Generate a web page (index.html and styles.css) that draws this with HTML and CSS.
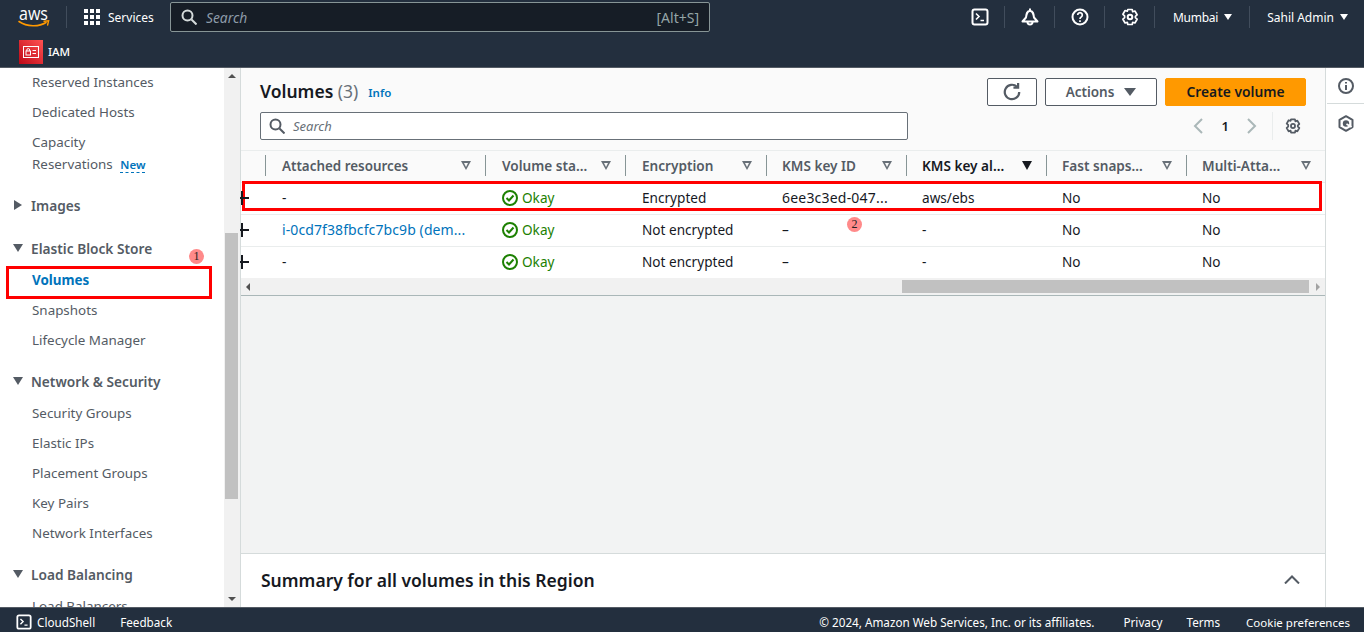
FILE: index.html
```html
<!DOCTYPE html>
<html>
<head>
    <title>Volumes | EC2</title>
    <link rel="stylesheet" href="styles.css">
</head>
<body>
    <header class="topnav">
        <div class="nav-row">
            <a class="logo">
                <svg width="32" height="24" viewBox="0 0 32 24">
                    <text x="1" y="13.500" class="logo-text" textLength="29" lengthAdjust="spacingAndGlyphs">aws</text>
                    <path d="M1 15.500c8 5.500 20 5.500 27 1" fill="none" stroke="#ff9900" stroke-width="1.600" stroke-linecap="round"/>
                    <path d="M26 15.200l4.600-.4-1 4.200" fill="none" stroke="#ff9900" stroke-width="1.400" stroke-linecap="round"/>
                </svg>
            </a>
            <span class="nav-sep sep-logo"></span>
            <span class="services-grid">
                <i></i><i></i><i></i><i></i><i></i><i></i><i></i><i></i><i></i>
            </span>
            <span class="nav-label services-label">Services</span>
            <div class="top-search">
                <svg width="16" height="16" viewBox="0 0 16 16" fill="none" stroke="#d5dbdb" stroke-width="2"><circle cx="6.500" cy="6.500" r="5"/><path d="M10.500 10.500l5 5"/></svg>
                <span class="top-search-text">Search</span>
                <span class="top-search-key">[Alt+S]</span>
            </div>
            <div class="nav-icons">
                <span class="nav-icon">
                    <svg width="18" height="18" viewBox="0 0 18 18" fill="none" stroke="#fff" stroke-width="2"><rect x="1.500" y="1.500" width="15" height="15" rx="2"/><path d="M5 5.500l3 3-3 3M9.500 12.500h3.500" stroke-width="1.600"/></svg>
                </span>
                <span class="nav-sep"></span>
                <span class="nav-icon">
                    <svg width="18" height="18" viewBox="0 0 18 18" fill="none" stroke="#fff" stroke-width="2"><path d="M1.500 13.500L5 9.500C5.500 5.500 6 3 9 3s3.500 2.500 4 6.500l3.500 4z" stroke-linejoin="round"/><path d="M9 .5V3"/><path d="M6.500 14a2.500 2.500 0 0 0 5 0"/></svg>
                </span>
                <span class="nav-sep"></span>
                <span class="nav-icon">
                    <svg width="18" height="18" viewBox="0 0 18 18" fill="none" stroke="#fff" stroke-width="2"><circle cx="9" cy="9" r="7.500"/><path d="M6.700 7a2.300 2.300 0 1 1 3.500 2c-.9.500-1.200 1-1.200 2" stroke-width="1.700"/><path d="M9 12.300v1.600" stroke-width="1.700"/></svg>
                </span>
                <span class="nav-sep"></span>
                <span class="nav-icon">
                    <svg width="18" height="18" viewBox="0 0 18 18" fill="none" stroke="#fff" stroke-width="2"><path d="M6.800 1.500h4.400l.5 2.200 2.200-.7 2.200 3.800-1.700 1.500v1.400l1.700 1.500-2.200 3.800-2.200-.7-.5 2.200H6.800l-.5-2.200-2.200.7-2.200-3.800 1.700-1.500V7.800L1.900 6.300l2.200-3.800 2.200.7z" stroke-width="1.700" stroke-linejoin="round"/><circle cx="9" cy="9" r="2.300"/></svg>
                </span>
                <span class="nav-sep"></span>
                <span class="nav-menu region">Mumbai<b class="caret"></b></span>
                <span class="nav-sep"></span>
                <span class="nav-menu user">Sahil Admin<b class="caret"></b></span>
            </div>
        </div>
        <div class="nav-row second">
            <span class="iam-badge">
                <svg width="16" height="12" viewBox="0 0 16 12" fill="none" stroke="#fff" stroke-width="1"><rect x=".5" y=".5" width="15" height="11"/><rect x="3" y="5" width="4.500" height="4"/><path d="M3.800 5V4a1.400 1.400 0 0 1 2.900 0v1M9.500 4.500H13M9.500 7.500H13"/></svg>
            </span>
            <span class="nav-label">IAM</span>
        </div>
    </header>

    <div class="main">
        <nav class="sidenav">
            <div class="sidenav-list">
                <a class="side-link">Reserved Instances</a>
                <a class="side-link">Dedicated Hosts</a>
                <a class="side-link two-line">Capacity<br>Reservations <span class="new-tag">New</span></a>
                <h4 class="side-head"><b class="tri-right"></b>Images</h4>
                <h4 class="side-head"><b class="tri-down"></b>Elastic Block Store</h4>
                <a class="side-link active">Volumes</a>
                <a class="side-link">Snapshots</a>
                <a class="side-link">Lifecycle Manager</a>
                <h4 class="side-head"><b class="tri-down"></b>Network &amp; Security</h4>
                <a class="side-link">Security Groups</a>
                <a class="side-link">Elastic IPs</a>
                <a class="side-link">Placement Groups</a>
                <a class="side-link">Key Pairs</a>
                <a class="side-link">Network Interfaces</a>
                <h4 class="side-head"><b class="tri-down"></b>Load Balancing</h4>
                <a class="side-link">Load Balancers</a>
            </div>
            <div class="side-scroll">
                <b class="arrow-up"></b>
                <div class="side-track"><div class="side-thumb"></div></div>
                <b class="arrow-down"></b>
            </div>
        </nav>

        <section class="content">
            <div class="panel-head">
                <div class="title-row">
                    <h1>Volumes <span class="count">(3)</span></h1>
                    <a class="info">Info</a>
                    <div class="actions">
                        <button class="btn btn-icon">
                            <svg width="20" height="20" viewBox="0 0 18 18" fill="none" stroke="#545b64" stroke-width="2"><path d="M15.500 9a6.500 6.500 0 1 1-2-4.700"/><path d="M14.500 .8v4.200h-4.200"/></svg>
                        </button>
                        <button class="btn btn-actions">Actions<b class="tri-down big"></b></button>
                        <button class="btn btn-primary">Create volume</button>
                    </div>
                </div>
                <div class="search-row">
                    <div class="filter">
                        <svg width="16" height="16" viewBox="0 0 16 16" fill="none" stroke="#545b64" stroke-width="2"><circle cx="6.500" cy="6.500" r="5"/><path d="M10.500 10.500l5 5"/></svg>
                        <span>Search</span>
                    </div>
                    <div class="pager">
                        <svg width="10" height="16" viewBox="0 0 10 16" fill="none" stroke="#aab7b8" stroke-width="2"><path d="M9 1L2 8l7 7"/></svg>
                        <span class="page-num">1</span>
                        <svg width="10" height="16" viewBox="0 0 10 16" fill="none" stroke="#aab7b8" stroke-width="2"><path d="M1 1l7 7-7 7"/></svg>
                        <span class="pager-sep"></span>
                        <svg class="pager-gear" width="16" height="16" viewBox="0 0 18 18" fill="none" stroke="#545b64" stroke-width="2"><path d="M6.800 1.500h4.400l.5 2.200 2.200-.7 2.200 3.800-1.700 1.500v1.400l1.700 1.500-2.200 3.800-2.200-.7-.5 2.200H6.800l-.5-2.200-2.200.7-2.200-3.800 1.700-1.500V7.800L1.900 6.300l2.200-3.800 2.200.7z" stroke-linejoin="round"/><circle cx="9" cy="9" r="2.300"/></svg>
                    </div>
                </div>
            </div>

            <div class="table-wrap">
                <div class="t-row t-header">
                    <div class="c c0"></div>
                    <div class="c c1 th">Attached resources<b class="sort"></b></div>
                    <div class="c c2 th">Volume sta...<b class="sort"></b></div>
                    <div class="c c3 th">Encryption<b class="sort"></b></div>
                    <div class="c c4 th">KMS key ID<b class="sort"></b></div>
                    <div class="c c5 th sorted">KMS key al...<b class="sort on"></b></div>
                    <div class="c c6 th">Fast snaps...<b class="sort"></b></div>
                    <div class="c c7 th">Multi-Atta...<b class="sort"></b></div>
                </div>
                <div class="t-row">
                    <div class="c c0"><span class="plus"></span></div>
                    <div class="c c1">-</div>
                    <div class="c c2"><svg class="ok" width="16" height="16" viewBox="0 0 16 16" fill="none" stroke="#1d8102" stroke-width="2"><circle cx="8" cy="8" r="7"/><path d="M4.500 8l2.500 2.500 4.500-5"/></svg><span class="ok-text">Okay</span></div>
                    <div class="c c3">Encrypted</div>
                    <div class="c c4 long-id">6ee3c3ed-047...</div>
                    <div class="c c5">aws/ebs</div>
                    <div class="c c6">No</div>
                    <div class="c c7">No</div>
                </div>
                <div class="t-row">
                    <div class="c c0"><span class="plus"></span></div>
                    <div class="c c1"><a class="link">i-0cd7f38fbcfc7bc9b (dem...</a></div>
                    <div class="c c2"><svg class="ok" width="16" height="16" viewBox="0 0 16 16" fill="none" stroke="#1d8102" stroke-width="2"><circle cx="8" cy="8" r="7"/><path d="M4.500 8l2.500 2.500 4.500-5"/></svg><span class="ok-text">Okay</span></div>
                    <div class="c c3">Not encrypted</div>
                    <div class="c c4">–</div>
                    <div class="c c5">-</div>
                    <div class="c c6">No</div>
                    <div class="c c7">No</div>
                </div>
                <div class="t-row">
                    <div class="c c0"><span class="plus"></span></div>
                    <div class="c c1">-</div>
                    <div class="c c2"><svg class="ok" width="16" height="16" viewBox="0 0 16 16" fill="none" stroke="#1d8102" stroke-width="2"><circle cx="8" cy="8" r="7"/><path d="M4.500 8l2.500 2.500 4.500-5"/></svg><span class="ok-text">Okay</span></div>
                    <div class="c c3">Not encrypted</div>
                    <div class="c c4">–</div>
                    <div class="c c5">-</div>
                    <div class="c c6">No</div>
                    <div class="c c7">No</div>
                </div>
                <div class="h-scroll">
                    <b class="arrow-left"></b>
                    <div class="h-track"><div class="h-thumb"></div></div>
                    <b class="arrow-right"></b>
                </div>
            </div>

            <div class="empty-area"></div>

            <div class="summary">
                <h2>Summary for all volumes in this Region</h2>
                <svg width="16" height="9" viewBox="0 0 16 9" fill="none" stroke="#545b64" stroke-width="2"><path d="M1 8.500l7-7 7 7"/></svg>
            </div>
        </section>

        <aside class="rail">
            <div class="rail-item">
                <svg width="16" height="16" viewBox="0 0 16 16" fill="none" stroke="#545b64" stroke-width="2"><circle cx="8" cy="8" r="7"/><path d="M8 7v5M8 4v1.600"/></svg>
            </div>
            <div class="rail-item">
                <svg width="16" height="17" viewBox="0 0 16 17" fill="none" stroke="#545b64" stroke-width="2"><path d="M8 1.200l6.500 3.700v7.200L8 15.800l-6.500-3.700V4.900z" stroke-linejoin="round"/><circle cx="8" cy="8.500" r="3.200" fill="#545b64" stroke="none"/><path d="M8.500 9l5 3" stroke="#fff" stroke-width="1.800"/></svg>
            </div>
        </aside>
    </div>

    <footer class="footer">
        <svg width="16" height="16" viewBox="0 0 18 18" fill="none" stroke="#fff" stroke-width="2"><rect x="1.500" y="1.500" width="15" height="15" rx="2"/><path d="M5 5.500l3 3-3 3M9.500 12.500h3.500" stroke-width="1.600"/></svg>
        <span class="foot-shell">CloudShell</span>
        <span class="foot-feedback">Feedback</span>
        <span class="foot-copy">© 2024, Amazon Web Services, Inc. or its affiliates.</span>
        <span class="foot-privacy">Privacy</span>
        <span class="foot-terms">Terms</span>
        <span class="foot-cookie">Cookie preferences</span>
    </footer>

    <!-- annotations drawn on top of the screenshot -->
    <div class="mark mark-side"></div>
    <div class="mark mark-row"></div>
    <span class="dot dot-one">1</span>
    <span class="dot dot-two">2</span>
</body>
</html>
```

FILE: styles.css
```css
* {
  box-sizing: border-box;
}

html, body {
  height: 100%;
}

body {
  margin: 0;
  height: 632px;
  overflow: hidden;
  display: flex;
  flex-direction: column;
  font-family: "Noto Sans", Arial, sans-serif;
  font-size: 13.6px;
  color: #16191f;
  background-color: #f2f3f3;
  position: relative;
}

/* top bar */
.topnav {
  height: 68px;
  background-color: #232f3e;
  border-bottom: 1px solid #545b64;
  color: white;
  flex: none;
}

.nav-row {
  display: flex;
  align-items: center;
  height: 34px;
  padding: 0 16px 0 18px;
}

.nav-row.second {
  height: 33px;
  padding-left: 19px;
  padding-top: 2px;
}

.logo {
  width: 32px;
  height: 24px;
  display: block;
  margin-top: 1px;
}

.logo svg {
  display: block;
  overflow: visible;
}

.logo-text {
  font-family: "Open Sans", sans-serif;
  font-size: 19px;
  fill: white;
}

.nav-sep {
  width: 1px;
  height: 22px;
  background-color: #414d5c;
  flex: none;
}

.sep-logo {
  margin-left: 16px;
  margin-right: 17px;
}

.services-grid {
  display: grid;
  grid-template-columns: repeat(3, 4px);
  grid-auto-rows: 4px;
  gap: 2px;
}

.services-grid i {
  background-color: white;
  display: block;
}

.nav-label {
  font-size: 12px;
  color: white;
}

.services-label {
  margin-left: 8px;
  width: 62px;
}

.second .nav-label {
  margin-left: 5px;
  font-size: 11.500px;
  font-weight: 500;
}

.top-search {
  width: 540px;
  height: 30px;
  background-color: #161d26;
  border: 1px solid #879596;
  border-radius: 2px;
  display: flex;
  align-items: center;
  padding: 0 10px;
}

.top-search-text {
  font-style: italic;
  font-size: 13.800px;
  color: #8d9ba9;
  margin-left: 9px;
  flex: 1;
}

.top-search-key {
  color: #95a5a6;
  font-size: 14px;
}

.nav-icons {
  display: flex;
  align-items: center;
  margin-left: auto;
}

.nav-icon {
  width: 18px;
  height: 18px;
  margin: 0 15px 0 16px;
  display: block;
}

.nav-icon svg {
  display: block;
}

.nav-menu {
  font-size: 12px;
  display: flex;
  align-items: center;
}

.region {
  letter-spacing: -.25px;
  margin: 0 17px 0 18px;
}

.user {
  margin-left: 17px;
}

.caret {
  width: 0;
  height: 0;
  border-left: 4.500px solid transparent;
  border-right: 4.500px solid transparent;
  border-top: 6px solid white;
  margin-left: 6px;
}

.iam-badge {
  width: 24px;
  height: 24px;
  background: linear-gradient(45deg, #bd0816, #ff5252);
  display: flex;
  align-items: center;
  justify-content: center;
}

/* main area */
.main {
  display: flex;
  flex: 1;
  min-height: 0;
}

.sidenav {
  width: 241px;
  background-color: white;
  display: flex;
  flex: none;
  border-right: 1px solid #d5dbdb;
}

.sidenav-list {
  width: 224px;
  overflow: hidden;
  color: #545b64;
  font-size: 13.400px;
  margin-top: -1px;
  display: flex;
  flex-direction: column;
}

.side-link {
  display: block;
  flex: none;
  line-height: 20px;
  padding: 5px 0 5px 32px;
  height: 30px;
  white-space: nowrap;
}

.side-link.two-line {
  height: 52px;
  line-height: 22px;
  padding-top: 4px;
}

.side-link.active {
  color: #0073bb;
  font-weight: 700;
}

.new-tag {
  color: #0073bb;
  font-size: 11.500px;
  font-weight: 600;
  border-bottom: 1px dashed #0073bb;
  margin-left: 4px;
}

.side-head {
  font-size: 13.700px;
  font-weight: 600;
  flex: none;
  margin: 11px 0 2px;
  padding-left: 13px;
  height: 30px;
  color: #545b64;
  display: flex;
  align-items: center;
}

.tri-down {
  width: 0;
  height: 0;
  border-left: 5.500px solid transparent;
  border-right: 5.500px solid transparent;
  border-top: 8px solid #545b64;
  margin-right: 8px;
}

.tri-right {
  width: 0;
  height: 0;
  border-top: 5px solid transparent;
  border-bottom: 5px solid transparent;
  border-left: 8px solid #545b64;
  margin-left: 1px;
  margin-right: 9px;
}

.side-scroll {
  width: 16px;
  background-color: #f1f1f1;
  display: flex;
  flex-direction: column;
  align-items: center;
}

.side-track {
  flex: 1;
  width: 100%;
  padding-top: 149px;
}

.side-thumb {
  width: 13px;
  height: 266px;
  margin-left: 1px;
  background-color: #c1c1c1;
}

.arrow-up,
.arrow-down {
  width: 0;
  height: 0;
  margin: 6px 0;
  border-left: 4px solid transparent;
  border-right: 4px solid transparent;
}

.arrow-up {
  border-bottom: 4px solid #505050;
}

.arrow-down {
  border-top: 4px solid #505050;
}

/* content */
.content {
  flex: 1;
  display: flex;
  flex-direction: column;
  min-width: 0;
}

.panel-head {
  background-color: #fafafa;
  padding: 10px 19px 0;
  height: 82px;
  flex: none;
}

.title-row {
  display: flex;
  align-items: center;
  height: 28px;
}

h1 {
  font-size: 17.500px;
  font-weight: 600;
  margin: -2px 0 0;
  line-height: 26px;
}

.count {
  color: #687078;
  font-weight: 400;
}

.info {
  color: #0073bb;
  font-size: 11.500px;
  font-weight: 600;
  margin-left: 10px;
  margin-top: 1px;
}

.actions {
  margin-left: auto;
  display: flex;
  gap: 8px;
}

.btn {
  height: 28px;
  border: 1px solid #545b64;
  border-radius: 2px;
  background-color: white;
  font-family: "Noto Sans", Arial, sans-serif;
  font-size: 13.500px;
  font-weight: 600;
  color: #545b64;
  display: flex;
  align-items: center;
  justify-content: center;
  padding: 0;
}

.btn-icon {
  width: 50px;
}

.btn-actions {
  width: 112px;
}

.tri-down.big {
  margin: 0 0 0 10px;
  border-left-width: 6px;
  border-right-width: 6px;
}

.btn-primary {
  width: 141px;
  background-color: #ff9900;
  border-color: #ff9900;
  color: #16191f;
  font-size: 13.800px;
  padding-bottom: 1px;
}

.search-row {
  display: flex;
  align-items: center;
  margin-top: 6px;
}

.filter {
  width: 648px;
  height: 28px;
  border: 1px solid #687078;
  border-radius: 2px;
  background-color: white;
  display: flex;
  align-items: center;
  padding-left: 8px;
  font-size: 13px;
  font-style: italic;
  color: #687078;
}

.filter span {
  margin-left: 8px;
}

.pager {
  margin-left: auto;
  display: flex;
  align-items: center;
}

.page-num {
  font-weight: 600;
  font-size: 13px;
  margin: 0 18px 0 19px;
}

.pager-sep {
  width: 1px;
  height: 28px;
  background-color: #eaeded;
  margin: 0 12px 0 15px;
}

.pager-gear {
  margin-right: 5px;
}

/* table */
.table-wrap {
  background-color: white;
  border-top: 1px solid #eaeded;
  border-bottom: 1px solid #aab7b8;
  flex: none;
}

.t-row {
  display: flex;
  height: 32px;
  align-items: center;
  border-top: 1px solid #eaeded;
  padding-bottom: 2px;
}

.t-header {
  background-color: #fafafa;
  border-top: none;
  height: 31px;
}

.c {
  flex: none;
  padding-left: 17px;
  white-space: nowrap;
  position: relative;
}

.c0 {
  width: 24px;
  padding: 0;
}

.c1 { width: 220px; }
.c2 { width: 140px; display: flex; align-items: center; }
.c3 { width: 141px; }
.c4 { width: 140px; }
.c5 { width: 140px; }
.c6 { width: 140px; }
.c7 { width: 139px; }

.c4, .c5, .c6, .c7 {
  padding-left: 16px;
}

.th {
  font-weight: 600;
  color: #545b64;
  display: flex;
  align-items: center;
  height: 21px;
  border-left: 1px solid #879596;
  padding-left: 16px;
}

.th.c1 {
  font-size: 13.400px;
}

.th.c4, .th.c5, .th.c6, .th.c7 {
  padding-left: 15px;
}

.sorted {
  color: #16191f;
}

.sort {
  position: absolute;
  right: 14px;
  top: 6px;
  width: 0;
  height: 0;
  border-left: 5.500px solid transparent;
  border-right: 5.500px solid transparent;
  border-top: 9px solid #687078;
}

.sort::after {
  content: "";
  position: absolute;
  left: -2.500px;
  top: -7.500px;
  border-left: 2.500px solid transparent;
  border-right: 2.500px solid transparent;
  border-top: 4px solid #fafafa;
}

.sort.on {
  border-top-color: #16191f;
}

.sort.on::after {
  display: none;
}

/* the clipped expander sits over the red annotation */
.plus {
  display: block;
  position: relative;
  z-index: 2;
  width: 9px;
  height: 14px;
  margin-left: -1px;
  background:
    linear-gradient(#16191f, #16191f) 0 6px / 9px 2px no-repeat,
    linear-gradient(#16191f, #16191f) 1px 0 / 2px 14px no-repeat;
}

.ok {
  margin-right: 4px;
}

.ok-text {
  color: #1d8102;
}

.link {
  color: #0073bb;
  font-size: 14px;
  letter-spacing: .1px;
}

.long-id {
  font-size: 14px;
  letter-spacing: .2px;
}

.h-scroll {
  height: 17px;
  background-color: #f1f1f1;
  display: flex;
  align-items: center;
}

.h-track {
  flex: 1;
  height: 100%;
  padding: 2px 0 2px 647px;
}

.h-thumb {
  width: 407px;
  height: 13px;
  background-color: #c1c1c1;
}

.arrow-left,
.arrow-right {
  width: 0;
  height: 0;
  margin: 0 5px;
  border-top: 4px solid transparent;
  border-bottom: 4px solid transparent;
}

.arrow-left {
  border-right: 4px solid #505050;
}

.arrow-right {
  border-left: 4px solid #a3a3a3;
}

.empty-area {
  flex: 1;
  background-color: #f2f3f3;
}

.summary {
  flex: none;
  height: 54px;
  background-color: white;
  border-top: 1px solid #d5dbdb;
  display: flex;
  align-items: center;
  justify-content: space-between;
  padding: 0 25px 2px 20px;
}

h2 {
  font-size: 17.500px;
  font-weight: 600;
  margin: 0;
}

/* right rail */
.rail {
  width: 39px;
  background-color: white;
  border-left: 1px solid #d5dbdb;
  flex: none;
  padding-left: 1px;
}

.rail-item {
  height: 36px;
  border-bottom: 1px solid #d5dbdb;
  display: flex;
  align-items: center;
  justify-content: center;
}

.rail-item:last-child {
  border-bottom: none;
  height: 38px;
}

/* footer */
.footer {
  height: 25px;
  flex: none;
  background-color: #232f3e;
  border-top: 1px solid #545b64;
  color: white;
  font-size: 11.700px;
  display: flex;
  align-items: center;
  padding: 4px 0 0 16px;
}

.foot-shell {
  margin-left: 5px;
}

.foot-feedback {
  margin-left: 25px;
}

.foot-copy {
  margin-left: auto;
}

.foot-privacy {
  margin-left: 29px;
}

.foot-terms {
  margin-left: 24px;
}

.foot-cookie {
  font-size: 11.500px;
  margin-left: 26px;
  margin-right: 14px;
}

/* annotations */
.mark {
  position: absolute;
  border: 3px solid #ff0000;
}

.mark-side {
  left: 6px;
  top: 266px;
  width: 206px;
  height: 33px;
}

.mark-row {
  left: 242px;
  top: 181px;
  width: 1080px;
  height: 30px;
}

.dot {
  position: absolute;
  width: 15px;
  height: 15px;
  border-radius: 50%;
  background-color: #ff8a8a;
  color: #222;
  font-size: 12px;
  line-height: 15px;
  text-align: center;
  font-family: "Liberation Serif", serif;
}

.dot-one {
  left: 189px;
  top: 249px;
}

.dot-two {
  left: 847px;
  top: 217px;
}
```
